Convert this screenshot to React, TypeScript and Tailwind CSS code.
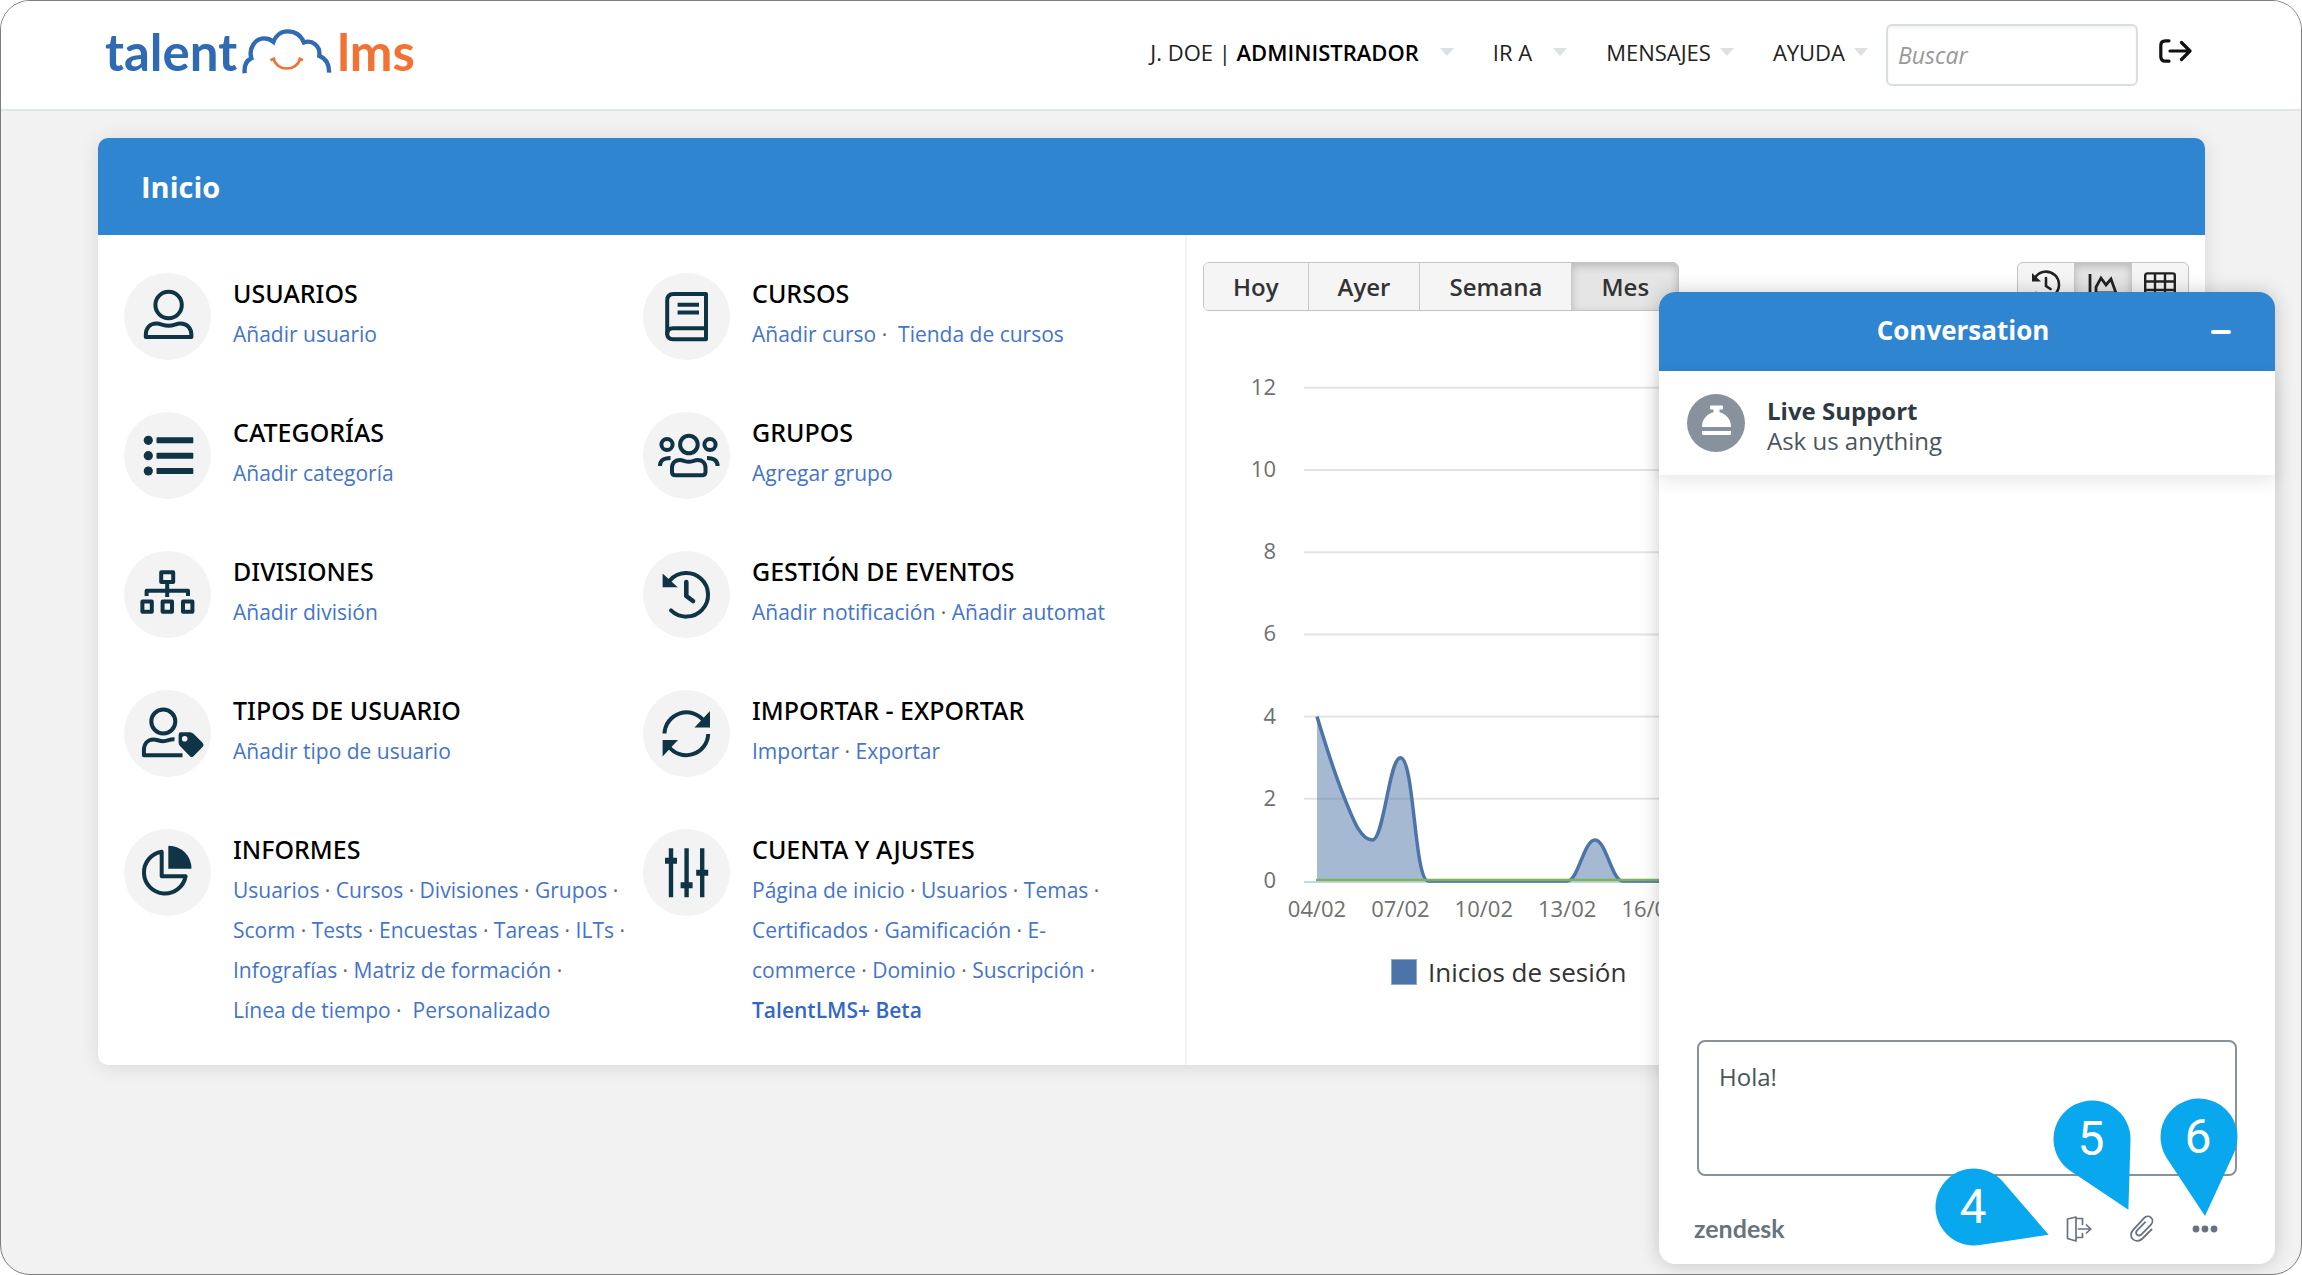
import React from 'react';

interface MenuItem {
  title: string;
  icon: React.ReactNode;
  links: string[];
  boldLast?: boolean;
  wideLastGap?: boolean;
}

const stroke = {
  fill: 'none',
  stroke: '#0f3446',
  strokeWidth: 4,
  strokeLinecap: 'round' as const,
  strokeLinejoin: 'round' as const,
};

const UserIcon = () => (
  <g {...stroke}>
    <circle cx="44.6" cy="32" r="13.2" />
    <path d="M21.8 64V62C21.8 55 26 50.5 32.5 50.5C37 50.5 39 52.8 44.6 52.8C50 52.8 52 50.5 56.5 50.5C63 50.5 67.4 55 67.4 62V64Z" />
  </g>
);

const ListIcon = () => (
  <g fill="#0f3446">
    {[28.3, 43.7, 59].map((y) => (
      <g key={y}>
        <circle cx="24.3" cy={y} r="4.6" />
        <rect x="32.5" y={y - 3} width="36.8" height="6" rx="0.8" />
      </g>
    ))}
  </g>
);

const SitemapIcon = () => (
  <g {...stroke}>
    <rect x="37.2" y="21.3" width="12" height="9.6" />
    <path d="M43.2 32V46M22.6 45V39.8H64V45" strokeLinecap="butt" />
    <rect x="18.4" y="50.6" width="9.4" height="10.2" />
    <rect x="38.6" y="50.6" width="9.4" height="10.2" />
    <rect x="59" y="50.6" width="9.4" height="10.2" />
  </g>
);

const UserTagIcon = () => (
  <g>
    <g {...stroke} strokeLinecap="butt">
      <circle cx="39.3" cy="31.5" r="12" />
      <path d="M50.5 49.4C46 48.8 44 51.2 39.3 51.2C35 51.2 33 49.4 29.5 49.4C23.5 49.4 19.9 54 19.9 60.5V65.2H58.5" />
    </g>
    <path
      fill="#0f3446"
      fillRule="evenodd"
      d="M57 42.3H66Q68 42.3 69.5 43.8L78.8 53Q80.4 55 78.8 56.8L69.2 66.4Q67.7 67.8 66.2 66.4L56 56Q54.6 54.5 54.6 52.5V44.7Q54.6 42.3 57 42.3ZM60.7 46A2.8 2.8 0 1 0 60.7 51.6A2.8 2.8 0 1 0 60.7 46Z"
    />
  </g>
);

const PieIcon = () => (
  <g>
    <path {...stroke} d="M37.7 22.7V47.3H61.6A21 21 0 1 1 37.7 22.7Z" />
    <path fill="#0f3446" d="M44.3 17.4Q44.3 16.7 45 16.7A22.8 22.8 0 0 1 67.5 39Q67.5 39.7 66.8 39.7H44.3Z" />
  </g>
);

const BookIcon = () => (
  <g {...stroke}>
    <path d="M63 21H30.5Q24.2 21 24.2 27.5V60.5Q24.2 66.3 30 66.3H63V21" />
    <path d="M24.2 61Q24.2 55.3 30 55.3H63" />
    <path d="M34.6 31.8H56M34.6 39.5H56" strokeLinecap="butt" />
  </g>
);

const GroupIcon = () => (
  <g {...stroke}>
    <circle cx="45.9" cy="32.5" r="8.8" />
    <circle cx="24" cy="32.5" r="5.6" />
    <circle cx="67" cy="32.5" r="5.6" />
    <path d="M29 60V56C29 50.5 32.5 48 37 48C40 48 42 49.8 45.8 49.8C49.6 49.8 51.5 48 54.6 48C59 48 62.5 50.5 62.5 56V60Q62.5 63.3 59 63.3H32.5Q29 63.3 29 60Z" />
    <path d="M17 54C17 49 19.5 46 27.5 46M74.6 54C74.6 49 72 46 64 46" strokeLinecap="butt" />
  </g>
);

const HistoryIcon = () => (
  <g>
    <path {...stroke} d="M27 29.3A21.8 21.8 0 1 1 28 59.4" />
    <path {...stroke} strokeWidth={4.6} d="M43.3 31V45L50 50" />
    <path fill="#0f3446" d="M19.6 22.5L34.8 36.3H19.6Z" />
  </g>
);

const SyncIcon = () => (
  <g>
    <path {...stroke} strokeLinecap="butt" d="M21.5 43.5A22 22 0 0 1 61 31M65.2 44A22 22 0 0 1 25.6 56.4" />
    <path fill="#0f3446" d="M67 21V37.4H51.5ZM19.6 66.4V50H35Z" />
  </g>
);

const SlidersIcon = () => (
  <g {...stroke} strokeWidth={4.4} strokeLinecap="butt">
    <path d="M28 19.3V68.3M43.6 19.3V68.3M59.2 19.3V68.3" />
    <path d="M22 31.7H34M37.6 56.3H49.6M53.2 43.7H65.2" strokeWidth={6} />
  </g>
);

const menuItems: MenuItem[] = [
  { title: 'USUARIOS', icon: <UserIcon />, links: ['Añadir usuario'] },
  { title: 'CURSOS', icon: <BookIcon />, links: ['Añadir curso', 'Tienda de cursos'], wideLastGap: true },
  { title: 'CATEGORÍAS', icon: <ListIcon />, links: ['Añadir categoría'] },
  { title: 'GRUPOS', icon: <GroupIcon />, links: ['Agregar grupo'] },
  { title: 'DIVISIONES', icon: <SitemapIcon />, links: ['Añadir división'] },
  { title: 'GESTIÓN DE EVENTOS', icon: <HistoryIcon />, links: ['Añadir notificación', 'Añadir automat'] },
  { title: 'TIPOS DE USUARIO', icon: <UserTagIcon />, links: ['Añadir tipo de usuario'] },
  { title: 'IMPORTAR - EXPORTAR', icon: <SyncIcon />, links: ['Importar', 'Exportar'] },
  {
    title: 'INFORMES',
    icon: <PieIcon />,
    links: [
      'Usuarios', 'Cursos', 'Divisiones', 'Grupos', 'Scorm', 'Tests', 'Encuestas', 'Tareas', 'ILTs',
      'Infografías', 'Matriz de formación', 'Línea de tiempo', 'Personalizado',
    ],
    wideLastGap: true,
  },
  {
    title: 'CUENTA Y AJUSTES',
    icon: <SlidersIcon />,
    links: [
      'Página de inicio', 'Usuarios', 'Temas', 'Certificados', 'Gamificación', 'E-commerce', 'Dominio',
      'Suscripción', 'TalentLMS+ Beta',
    ],
    boldLast: true,
  },
];

const Logo = () => (
  <a href="#" aria-label="talentlms" className="flex items-end font-[Lato,sans-serif] text-[51px] leading-[50px] font-bold">
    <span className="text-[#2f6ab2]">talent</span>
    <svg viewBox="440 38 275 140" className="mx-1 mb-[2px] h-[47px] w-[92px]" fill="none" strokeWidth="13">
      <path
        stroke="#2f6ab2"
        d="M451 173C449 152 456 135 471 128C462 98 482 68 512 69C522 69 530 73 537 79C544 60 560 48 579 48C603 48 620 62 628 81C653 72 678 92 674 121C695 129 704 147 703 171"
      />
      <path stroke="#f17233" strokeWidth="8" d="M537 131C552 168 602 168 617 131M528 134L542 128M612 128L625 134" />
    </svg>
    <span className="text-[#f17233]">lms</span>
  </a>
);

interface NavItemProps {
  children: React.ReactNode;
  wide?: boolean;
}

const NavItem = ({ children, wide }: NavItemProps) => (
  <button type="button" className={`flex items-center whitespace-nowrap ${wide ? 'gap-[21px]' : 'gap-[9px]'}`}>
    <span>{children}</span>
    <svg viewBox="0 0 14 8" className="h-2 w-[14px]" fill="#dde1e4">
      <path d="M0 0H14L7 8Z" />
    </svg>
  </button>
);

const Header = () => (
  <header className="flex h-[110px] items-start justify-between border-b-2 border-[#e1e6e8] bg-white pr-[109px] pl-[104px]">
    <div className="pt-[26px]">
      <Logo />
    </div>
    <div className="flex items-center pt-[23px]">
      <nav className="mr-[18px] mb-[6px] flex items-center gap-[39px] text-[22px] text-[#222]">
        <NavItem wide>
          J. DOE | <strong className="font-semibold text-black">ADMINISTRADOR</strong>
        </NavItem>
        <NavItem wide>IR A</NavItem>
        <NavItem>MENSAJES</NavItem>
        <NavItem>AYUDA</NavItem>
      </nav>
      <input
        type="text"
        aria-label="Buscar"
        placeholder="Buscar"
        className="h-[62px] w-[252px] rounded-md border-2 border-[#d9dee1] bg-white px-[10px] text-[23px] italic shadow-[inset_0_2px_3px_#0000000d] placeholder:text-[#999]"
      />
      <button type="button" aria-label="Salir" className="mb-[8px] ml-[21px]">
        <svg viewBox="0 0 33 24" className="h-6 w-[33px]" fill="none" stroke="#111" strokeWidth="3.2" strokeLinecap="round" strokeLinejoin="round">
          <path d="M10 1.8H6.5Q1.8 1.8 1.8 6.5V17.5Q1.8 22.2 6.5 22.2H10" />
          <path d="M11 12H30.5M22.5 3.5L31 12L22.5 20.5" />
        </svg>
      </button>
    </div>
  </header>
);

const MenuEntry = ({ item }: { item: MenuItem }) => (
  <div className="flex min-h-[139px] items-start gap-[22px]">
    <svg viewBox="0 0 87 87" className="h-[87px] w-[87px] shrink-0 rounded-full bg-[#f3f3f3]">
      {item.icon}
    </svg>
    <div className="min-w-0 flex-1">
      <h3 className="mb-[1px] font-['Noto_Sans','Open_Sans',sans-serif] text-[25px] leading-10 font-medium text-black">
        {item.title}
      </h3>
      <p className="text-[21px] leading-10 text-[#666]">
        {item.links.map((link, i) => {
          const last = i === item.links.length - 1;
          const wideGap = item.wideLastGap && i === item.links.length - 2;
          return (
            <React.Fragment key={link}>
              <a
                href="#"
                className={`${link.includes('-') ? '' : 'whitespace-nowrap'} ${last && item.boldLast ? 'font-semibold text-[#3268c4]' : 'text-[#4474cb]'}`}
              >
                {link}
              </a>
              {!last && (wideGap ? '\u00a0·\u00a0 ' : '\u00a0· ')}
            </React.Fragment>
          );
        })}
      </p>
    </div>
  </div>
);

// chart geometry, in pixels from the top left of the drawing
const X0 = 114;
const DAY = 27.8;
const Y0 = 570;
const UNIT = 41.1;
const px = (day: number) => X0 + day * DAY;
const py = (value: number) => Y0 - value * UNIT;

const curve = [
  `M${px(0)} ${py(4)}`,
  `C${px(0.4)} ${py(3.1)} ${px(0.7)} ${py(2.5)} ${px(1)} ${py(2)}`,
  `C${px(1.35)} ${py(1.4)} ${px(1.6)} ${py(1)} ${px(2)} ${py(1)}`,
  `C${px(2.4)} ${py(1)} ${px(2.6)} ${py(3)} ${px(3)} ${py(3)}`,
  `C${px(3.5)} ${py(3)} ${px(3.5)} ${py(0)} ${px(4)} ${py(0)}`,
  `H${px(9)}`,
  `C${px(9.4)} ${py(0)} ${px(9.6)} ${py(1)} ${px(10)} ${py(1)}`,
  `C${px(10.4)} ${py(1)} ${px(10.6)} ${py(0)} ${px(11)} ${py(0)}`,
  `H${px(28)}`,
].join(' ');

const LoginChart = () => (
  <svg className="h-[620px] w-full" role="img" aria-label="Inicios de sesión">
    {[12, 10, 8, 6, 4, 2].map((v) => (
      <line key={v} x1="101" x2="98%" y1={py(v)} y2={py(v)} stroke="#e4e4e4" strokeWidth="2" />
    ))}
    <line x1="101" x2="98%" y1={Y0 + 1} y2={Y0 + 1} stroke="#c9d5ea" strokeWidth="2" />
    <path d={`${curve} L${px(0)} ${py(0)}Z`} fill="#4c74a8" fillOpacity="0.5" />
    <path d={curve} fill="none" stroke="#4c74a8" strokeWidth="3.5" strokeLinejoin="round" />
    <line x1={px(0) - 1} x2={px(28)} y1={Y0 - 1} y2={Y0 - 1} stroke="#7cb35c" strokeWidth="2.5" />
    <g fill="#707070" fontSize="22">
      {[12, 10, 8, 6, 4, 2, 0].map((v) => (
        <text key={v} x="73" y={py(v) + 7} textAnchor="end">{v}</text>
      ))}
      {['04/02', '07/02', '10/02', '13/02', '16/02', '19/02', '22/02', '25/02', '28/02'].map((label, i) => (
        <text key={label} x={px(i * 3)} y={Y0 + 36} textAnchor="middle">{label}</text>
      ))}
    </g>
  </svg>
);

const tabs = ['Hoy', 'Ayer', 'Semana', 'Mes'];

const StatsPanel = () => (
  <section className="min-w-0 flex-1 border-l-2 border-[#f3f3f3] pt-[27px] pr-4 pl-4">
    <div className="flex justify-between">
      <div className="flex h-[49px] overflow-hidden rounded-md border border-[#c4c4c4] text-[24px] font-semibold text-[#333]">
        {tabs.map((tab) => (
          <button
            key={tab}
            type="button"
            className={`px-[29px] ${tab === 'Mes' ? 'bg-[#e5e5e5] shadow-[inset_0_3px_8px_#00000033]' : 'border-r border-[#c9c9c9] bg-[#f5f5f5]'}`}
          >
            {tab}
          </button>
        ))}
      </div>
      <div className="flex h-[49px] overflow-hidden rounded-md border border-[#c4c4c4] bg-[#f5f5f5]">
        <button type="button" aria-label="Historial" className="flex w-14 justify-center pt-[7px]">
          <svg viewBox="0 0 30 30" className="h-[30px] w-[30px]" fill="none" stroke="#222" strokeWidth="2.6" strokeLinecap="round">
            <path d="M4.5 7A13 13 0 1 1 5 23M15 8V16L19.5 19" />
            <path d="M1 3V11.5H10Z" fill="#222" stroke="none" />
          </svg>
        </button>
        <button type="button" aria-label="Gráfico" className="flex w-[58px] justify-center border-x border-[#c9c9c9] bg-[#e5e5e5] pt-[11px] shadow-[inset_0_3px_8px_#00000033]">
          <svg viewBox="0 0 32 28" className="h-7 w-8" fill="none" stroke="#222" strokeWidth="2.8">
            <path d="M3 0V25H31M9 19V13L14 4L19 11L24 5L29 19Z" />
          </svg>
        </button>
        <button type="button" aria-label="Tabla" className="flex w-14 justify-center pt-[9px]">
          <svg viewBox="0 0 32 28" className="h-7 w-8" fill="none" stroke="#222" strokeWidth="2.4">
            <rect x="1.2" y="1.4" width="29.6" height="25" rx="2" />
            <path d="M1 9.5H31M1 18H31M11 1V27M21 1V27" />
          </svg>
        </button>
      </div>
    </div>
    <LoginChart />
    <div className="flex items-center gap-[11px] pt-[27px] pl-[188px] text-[26px] leading-7 text-[#333]">
      <span className="h-[26px] w-[26px] border border-[#8fa8cc] bg-[#4c74a8]" />
      Inicios de sesión
    </div>
  </section>
);

interface CalloutProps {
  label: string;
  dx: number;
  dy: number;
  className: string;
}

// round marker whose two straight sides run from the circle to a tip at (dx, dy)
const Callout = ({ label, dx, dy, className }: CalloutProps) => {
  const r = 38.5;
  const a = Math.atan2(dy, dx);
  const b = Math.acos(r / Math.hypot(dx, dy));
  const at = (t: number) => `${r * Math.cos(t)} ${r * Math.sin(t)}`;
  return (
    <svg viewBox="-80 -80 160 160" className={`pointer-events-none absolute h-40 w-40 ${className}`}>
      <path d={`M${dx} ${dy}L${at(a + b)}A${r} ${r} 0 1 1 ${at(a - b)}Z`} fill="#09a7ee" />
      <text x="-1" y="16" textAnchor="middle" fontSize="48" fill="#fff" fontFamily="Roboto, sans-serif">{label}</text>
    </svg>
  );
};

const ChatWidget = () => (
  <aside className="absolute right-[26px] bottom-[10px] flex h-[972px] w-[616px] flex-col rounded-2xl bg-white shadow-[0_0_20px_#00000033]">
    <div className="flex h-[79px] shrink-0 items-center rounded-t-2xl bg-[#2f85d0] pr-[44px] pl-[56px] text-white">
      <h2 className="mb-[2px] flex-1 text-center text-[26px] font-bold">Conversation</h2>
      <button type="button" aria-label="Minimizar" className="flex h-8 w-5 items-center">
        <span className="h-1 w-full rounded-sm bg-white" />
      </button>
    </div>
    <div className="flex h-[104px] shrink-0 items-center gap-[22px] pl-7 shadow-[0_6px_16px_#00000018]">
      <svg viewBox="0 0 58 58" className="h-[58px] w-[58px]">
        <circle cx="29" cy="29" r="29" fill="#87929d" />
        <path d="M23 12.5Q23 11.5 24 11.5H35Q36 11.5 36 12.5V14.5Q36 15.5 35 15.5H32.5V18.2A15 15 0 0 1 44 33H15A15 15 0 0 1 26.5 18.2V15.5H24Q23 15.5 23 14.5ZM15 37H44V39.5Q44 41 42.5 41H16.5Q15 41 15 39.5Z" fill="#fff" />
      </svg>
      <div className="pt-[5px] text-[24px] leading-[30px] text-[#4b555e]">
        <div className="font-bold text-[#2f3941]">Live Support</div>
        <div>Ask us anything</div>
      </div>
    </div>
    <div className="flex-1" />
    <textarea
      aria-label="Mensaje"
      defaultValue="Hola!"
      className="mx-[38px] h-[136px] shrink-0 resize-none rounded-lg border-2 border-[#87929d] bg-white px-5 py-[17px] text-[24px] leading-9 text-[#49545c]"
    />
    <div className="flex h-[88px] shrink-0 items-center pt-[17px] pr-[57px] pl-[35px]">
      <a href="#" className="mb-[2px] flex-1 font-[Lato,sans-serif] text-[25px] leading-[26px] font-bold text-[#68737d]">zendesk</a>
      <div className="flex items-center gap-[38px]">
        <button type="button" aria-label="Finalizar chat">
          <svg viewBox="0 0 26 26" className="h-[26px] w-[26px]" fill="none" stroke="#68737d" strokeWidth="1.7" strokeLinejoin="round" strokeLinecap="round">
            <path d="M1.5 3L10 1V25L1.5 22.5ZM10 2.5H16.5V8.5M16.5 17.5V21.5H10M12.5 13H24.5M20.5 9L24.8 13L20.5 17" />
          </svg>
        </button>
        <button type="button" aria-label="Adjuntar archivo">
          <svg viewBox="0 0 24 27" className="h-[27px] w-6" fill="none" stroke="#68737d" strokeWidth="1.8" strokeLinecap="round">
            <path d="M21.5 14.5L12.5 23.5C9.5 26.5 5 26.5 2.7 24C0.3 21.5 0.6 17.5 3.2 14.8L14 3.2C16 1 19 0.8 21 2.6C23 4.5 22.9 7.6 21 9.7L11.5 19.3C10.2 20.6 8.2 20.8 7 19.6C5.8 18.4 6 16.6 7.3 15.2L15 7.3" />
          </svg>
        </button>
        <button type="button" aria-label="Más opciones">
          <svg viewBox="0 0 26 8" className="h-2 w-[26px]" fill="#68737d">
            <circle cx="4" cy="4" r="3.4" />
            <circle cx="13" cy="4" r="3.4" />
            <circle cx="22" cy="4" r="3.4" />
          </svg>
        </button>
      </div>
    </div>
    <Callout label="4" dx={74.6} dy={27.7} className="top-[835px] left-[235px]" />
    <Callout label="5" dx={36.4} dy={70.7} className="top-[767px] left-[353px]" />
    <Callout label="6" dx={6} dy={79} className="top-[765px] left-[460px]" />
  </aside>
);

export default function App() {
  return (
    <div className="bg-white font-['Open_Sans',sans-serif]">
      <div className="relative min-h-screen overflow-hidden rounded-[30px] border border-[#7d7d7d] bg-[#f2f2f2]">
        <Header />
        <div className="mr-[96px] ml-[97px] mt-[27px] rounded-[10px] bg-white shadow-[0_2px_20px_#0000001c]">
          <h1 className="flex h-[97px] items-center rounded-t-[10px] bg-[#2f85d0] pl-[43px] text-[29px] font-bold text-white">
            Inicio
          </h1>
          <div className="flex">
            <section className="grid w-[1087px] shrink-0 grid-cols-[505px_480px] gap-x-[14px] pt-[38px] pb-[35px] pl-[26px]">
              {menuItems.map((item) => (
                <MenuEntry key={item.title} item={item} />
              ))}
            </section>
            <StatsPanel />
          </div>
        </div>
        <ChatWidget />
      </div>
    </div>
  );
}
